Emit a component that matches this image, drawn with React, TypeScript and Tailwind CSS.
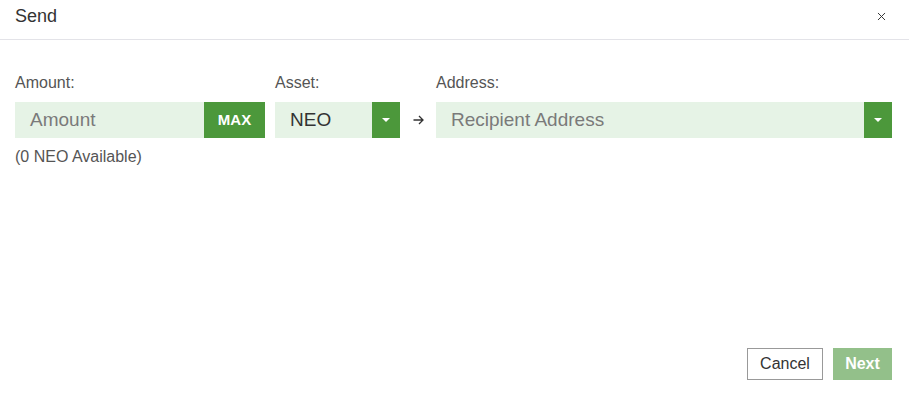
import { X } from 'lucide-react';

const FONT = { fontFamily: '"Liberation Sans", Arial, sans-serif' };

function Caret() {
  return (
    <div className="w-0 h-0 border-x-[4px] border-x-transparent border-t-[4px] border-t-white" />
  );
}

export default function App() {
  return (
    <div className="h-screen w-full bg-white flex flex-col text-[#333]" style={FONT}>
      {/* header */}
      <div className="h-[40px] flex justify-between items-start pl-[15px] pr-[21px] pt-[5px] border-b border-[#e3e3e8]">
        <span className="text-[18px] leading-[22px]">Send</span>
        <X className="w-[13px] h-[13px] mt-[5px] text-[#333]" strokeWidth={1.8} />
      </div>

      {/* form */}
      <div className="flex-1 pl-[15px] pr-[17px] pt-[33px]">
        <div className="flex">
          <div className="w-[250px] flex flex-col">
            <label className="text-[16px] leading-[20px] text-[#555] mb-[9px]">Amount:</label>
            <div className="flex h-[36px]">
              <div className="flex-1 bg-[#e6f3e6] flex items-center pl-[15px] text-[19px] text-[#7a7a7a]">Amount</div>
              <button className="w-[61px] bg-[#4c983b] text-white font-bold text-[15px]">MAX</button>
            </div>
          </div>

          <div className="w-[125px] ml-[10px] flex flex-col">
            <label className="text-[16px] leading-[20px] text-[#555] mb-[9px]">Asset:</label>
            <div className="flex h-[36px]">
              <div className="flex-1 bg-[#e6f3e6] flex items-center pl-[15px] text-[19px] text-[#333]">NEO</div>
              <div className="w-[28px] bg-[#4c983b] flex items-center justify-center">
                <Caret />
              </div>
            </div>
          </div>

          <div className="w-[36px] flex items-end justify-center h-[65px]">
            <div className="h-[36px] flex items-center">
              <svg width="11" height="10" viewBox="0 0 11 10" fill="none" stroke="#333" strokeWidth="1.3">
                <path d="M0.5 5h9.5M6 1l4 4-4 4" />
              </svg>
            </div>
          </div>

          <div className="flex-1 flex flex-col">
            <label className="text-[16px] leading-[20px] text-[#555] mb-[9px]">Address:</label>
            <div className="flex h-[36px]">
              <div className="flex-1 bg-[#e6f3e6] flex items-center pl-[15px] text-[19px] text-[#7a7a7a]">Recipient Address</div>
              <div className="w-[28px] bg-[#4c983b] flex items-center justify-center">
                <Caret />
              </div>
            </div>
          </div>
        </div>
        <div className="mt-[9px] text-[16px] leading-[20px] text-[#555]">(0 NEO Available)</div>
      </div>

      {/* footer */}
      <div className="flex justify-end gap-[10px] pr-[17px] pb-[16px]">
        <button className="w-[76px] h-[32px] border border-[#999] bg-white text-[16px] text-[#333]">Cancel</button>
        <button className="w-[59px] h-[32px] bg-[#93c08a] text-white font-bold text-[16px]">Next</button>
      </div>
    </div>
  );
}
